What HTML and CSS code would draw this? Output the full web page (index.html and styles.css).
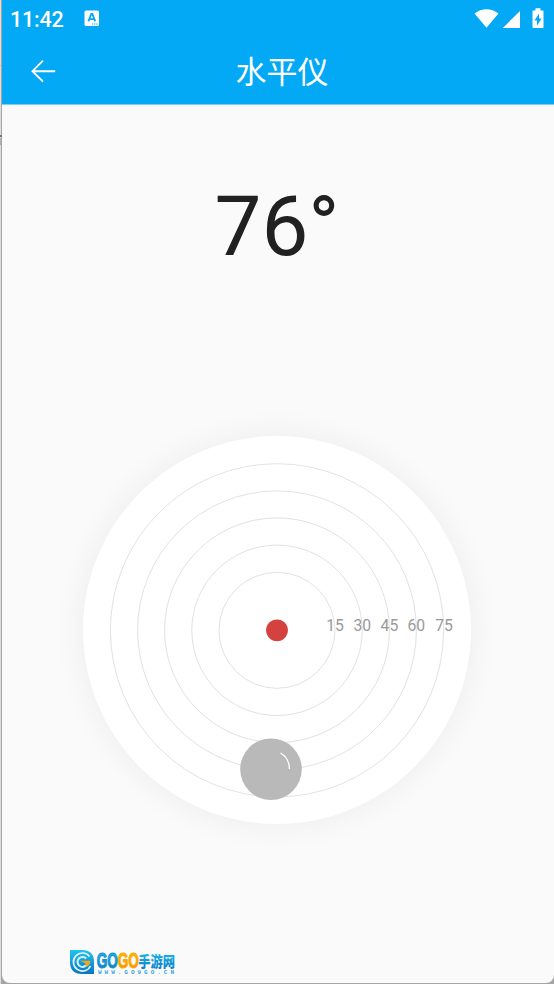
FILE: index.html
```html
<!DOCTYPE html>
<html lang="zh-CN">
<head>
<meta charset="utf-8">
<title>水平仪</title>
<link rel="stylesheet" href="styles.css">
</head>
<body>
<div class="phone">
  <header class="header">
    <div class="status">
      <span class="time">11:42</span>
      <svg class="app-icon" width="16" height="17" viewBox="0 0 16 17"><rect x=".5" y=".5" width="14.5" height="15.5" rx="1.5" fill="#fff"/><path d="M4.4 11.3 7.3 4h1l2.9 7.3M5.7 9.2h4.4" fill="none" stroke="#03a9f4" stroke-width="1.8"/><path d="M8 14h1.3m.8 0h1.3m.8 0h1.3" stroke="#03a9f4" stroke-width="1"/></svg>
      <svg class="signals" width="72" height="24" viewBox="0 0 72 24" fill="#fff"><path d="M.5 6.5C7.5 .8 17.5 .8 24.5 6.5L12.5 20.8Z"/><path d="M46 4v17H28.8Z"/><path d="M59.3 3.5h2.2V1.2h5v2.3h2.2q.8 0 .8.8v15.9q0 .8-.8.8h-9.4q-.8 0-.8-.8V4.3q0-.8.8-.8Z"/><path d="M65 6.5 60.5 13.5H63V18.7L67.5 11.4H65Z" fill="#03a9f4"/></svg>
    </div>
    <nav class="toolbar">
      <svg class="back" width="26" height="24" viewBox="0 0 26 24" fill="none" stroke="#fff" stroke-width="1.9"><path d="M12 1.7 1.5 12.2 12 22.7M1.5 12.2H24.2"/></svg>
      <h1>水平仪</h1>
    </nav>
  </header>
  <main>
    <div class="angle">76°</div>
    <div class="dial">
      <svg width="388" height="388" viewBox="0 0 388 388">
        <g class="rings"><circle cx="194" cy="194" r="58"/><circle cx="194" cy="194" r="85.2"/><circle cx="194" cy="194" r="112.4"/><circle cx="194" cy="194" r="139.4"/><circle cx="194" cy="194" r="166.6"/></g>
        <circle cx="194" cy="194" r="10.9" fill="#d3423e"/>
        <g class="labels"><text x="252" y="195">15</text><text x="279.3" y="195">30</text><text x="306.4" y="195">45</text><text x="333.3" y="195">60</text><text x="361" y="195">75</text></g>
        <circle cx="188" cy="332.9" r="30.8" fill="#b9b9b9"/>
        <path d="M197.4 316.7Q206 321.2 206.5 332.7" fill="none" stroke="#fff" stroke-width="1.3"/>
      </svg>
    </div>
  </main>
  <footer class="brand">
    <svg width="108" height="28" viewBox="0 0 108 28">
      <defs>
        <linearGradient id="blue" x1="0" y1="0" x2="0" y2="1"><stop stop-color="#20c4ef"/><stop offset="1" stop-color="#0875c3"/></linearGradient>
        <linearGradient id="gold" x1="0" y1="0" x2="0" y2="1"><stop stop-color="#ffc400"/><stop offset="1" stop-color="#f58a00"/></linearGradient>
      </defs>
      <path d="M1 2H13Q25 2 25 14V26H13Q1 26 1 14Z" fill="url(#blue)"/>
      <path d="M20.5 8.5A9 9 0 1 0 21.5 18" fill="none" stroke="#e8faff" stroke-width="1.6"/>
      <path d="M17.2 10.5A5 5 0 1 0 17 17.5" fill="none" stroke="#d5f4ff" stroke-width="2"/>
      <path d="M11 12.7H21.5Q21 17 17.5 19L16 15Z" fill="#f7a51d"/>
      <g transform="translate(27.7 20) scale(.62 1)"><text class="go blue">GO</text></g>
      <g transform="translate(48.7 20) scale(.62 1)"><text class="go gold">GO</text></g>
      <g transform="translate(69.2 19) scale(.82 1)"><text class="cn">手游网</text></g>
      <text class="url" x="29" y="26.3" textLength="76">WWW.GO9GO.CN</text>
    </svg>
  </footer>
</div>
</body>
</html>
```

FILE: styles.css
```css
* { box-sizing: border-box; }
body {
  margin: 0;
  height: 984px;
  overflow: hidden;
  background:
    linear-gradient(#777, #777) 0 135px / 2px 2px no-repeat,
    linear-gradient(#b0b0b0, #b0b0b0) 0 138px / 1px 7px no-repeat,
    linear-gradient(#c4c4c4, #c4c4c4) 0 65px / 1px 1px no-repeat,
    linear-gradient(90deg, #dedede 1px, #a5a5a5 1px);
  font-family: Roboto, "Noto Sans CJK SC", sans-serif;
}
.phone {
  display: flex;
  flex-direction: column;
  margin-left: 2px;
  height: 983px;
  background: #fafafa;
  border-radius: 0 0 8px 8px;
  overflow: hidden;
}
.header {
  height: 105px;
  background: #03a9f4;
  border-bottom: 1px solid #78cff8;
  color: #fff;
}
.status {
  display: flex;
  align-items: flex-start;
  height: 38px;
  padding-left: 8px;
}
.time {
  width: 74px;
  padding-top: 7px;
  font-size: 21.5px;
  line-height: 26px;
  font-weight: 500;
  letter-spacing: -.2px;
}
.app-icon { margin-top: 10px; }
.signals { margin: 7px 8px 0 auto; }
.toolbar {
  display: grid;
  grid-template-columns: 56px 1fr 48px;
  align-items: center;
  height: 66px;
}
.back { margin-left: 29px; }
h1 {
  margin: 0;
  padding-bottom: 3px;
  text-align: center;
  font-family: "Noto Sans CJK SC", sans-serif;
  font-size: 31px;
  line-height: 40px;
  font-weight: 400;
}
main {
  display: flex;
  flex-direction: column;
  align-items: center;
  padding-right: 2px;
}
.angle {
  margin-top: 72px;
  height: 100px;
  font-size: 83.5px;
  line-height: 100px;
  color: #212121;
}
.dial {
  width: 388px;
  height: 388px;
  margin-top: 159.4px;
  border-radius: 50%;
  background: #fff;
  box-shadow: 0 0 32px rgba(0, 0, 0, .06);
}
.dial svg, .brand svg { display: block; }
.dial svg { transform: translateY(.3px); }
.rings { fill: none; stroke: #e2e2e2; stroke-width: 1; }
.labels { font-size: 15.7px; fill: #999; text-anchor: middle; }
.brand { margin: 123.2px 0 0 67px; }
.go { font: 700 22px "Liberation Sans", sans-serif; stroke-width: 1; }
.blue { fill: url(#blue); stroke: #108fd3; }
.gold { fill: url(#gold); stroke: #ffa800; }
.cn { font: 900 15px "Noto Sans CJK SC", sans-serif; fill: url(#blue); }
.url { font: 700 6px "Liberation Mono", monospace; fill: #35a6dc; }
```
